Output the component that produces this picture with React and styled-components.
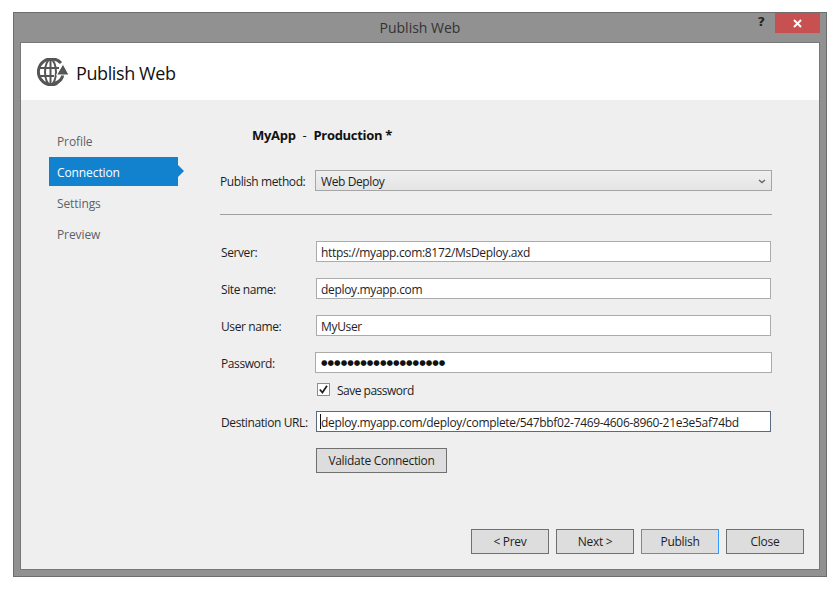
import React from "react";
import styled, { createGlobalStyle } from "styled-components";

const Global = createGlobalStyle`
  html, body { margin: 0; padding: 0; background: #fff; }
  * { box-sizing: border-box; }
  body { font-family: "Open Sans", "Noto Sans", sans-serif; font-size: 12px; color: #1e1e1e; }
`;
const Page = styled.div`
  width: 840px; height: 592px; padding: 12px 13px 0;
`;
const Window = styled.div`
  width: 814px; height: 565px; background: #919191; border: 1px solid #6d6d6d;
  display: flex; flex-direction: column; padding: 0 6px 6px 6px;
`;
const TitleBar = styled.div`
  height: 29px; flex: none; display: flex; align-items: center; justify-content: center; position: relative;
`;
const Title = styled.div`
  font-size: 14px; color: #333; letter-spacing: 0;
`;
const Help = styled.span`
  position: absolute; right: 55px; top: 1px; font: bold 13px "DejaVu Sans", sans-serif; color: #262626;
`;
const CloseX = styled.div`
  position: absolute; right: 0; top: 0; width: 45px; height: 20px; background: #c75050;
  display: flex; align-items: center; justify-content: center;
`;
const Body = styled.div`
  flex: 1; display: flex; flex-direction: column; background: #efefef; border: 1px solid #777;
`;
const Header = styled.div`
  height: 57px; flex: none; background: #fff; display: flex; align-items: center; padding-left: 16px; gap: 7px;
`;
const HeaderText = styled.div`
  font-size: 18px; color: #111; letter-spacing: -0.4px; padding-top: 3px;
`;
const Main = styled.div`
  flex: 1; display: flex; position: relative;
`;
const Nav = styled.nav`
  width: 159px; padding: 26px 0 0 28px; flex: none; display: flex; flex-direction: column; gap: 2px;
`;
const NavItem = styled.div`
  width: 129px; height: 29px; padding: 1px 0 0 8px; display: flex; align-items: center; position: relative; letter-spacing: -0.1px;
  color: ${p => (p.$active ? "#fff" : "#5f5f66")};
  background: ${p => (p.$active ? "#1382ce" : "transparent")};
  ${p => p.$active && `
    &::after {
      content: ""; position: absolute; left: 100%; top: 8px;
      border-left: 6px solid #1382ce; border-top: 6px solid transparent; border-bottom: 6px solid transparent;
    }
  `}
`;
const Form = styled.div`
  flex: 1; padding: 25px 0 0 40px; display: flex; flex-direction: column;
`;
const Profile = styled.div`
  height: 20px; margin-left: 32px; font-size: 13px; font-weight: 700; color: #111; display: flex; align-items: center; letter-spacing: -0.3px; white-space: pre;
`;
const Sep = styled.span`
  font-weight: 400; margin: 0 7px;
`;
const Row = styled.div`
  display: flex; align-items: center; height: 21px; margin-top: ${p => p.$mt || 16}px;
`;
const Label = styled.div`
  width: 96px; flex: none; padding: 1px 0 0 ${p => (p.$tight ? 0 : 1)}px; color: #1e1e1e; white-space: nowrap; letter-spacing: -0.4px;
`;
const Field = styled.div`
  width: 455px; height: 21px; background: #fff; border: 1px solid ${p => (p.$focus ? "#5a6b80" : "#ababab")};
  display: flex; align-items: center; padding: 1px 0 0 4px; color: #1e1e1e; white-space: nowrap; letter-spacing: -0.33px; position: relative;
`;
const PasswordField = styled(Field)`
  width: 457px; margin-left: -1px; padding: 0 0 0 5px;
`;
const Caret = styled.span`
  width: 1px; height: 15px; background: #111; position: absolute; left: 3px; top: 2px;
`;
const Dots = styled.span`
  font: 7.5px "DejaVu Sans", sans-serif; letter-spacing: 0; color: #111;
`;
const Select = styled.div`
  width: 457px; height: 21px; margin-left: -1px; border: 1px solid #a6a6a6; background: linear-gradient(#f0f0f0, #e4e4e4);
  display: flex; align-items: center; justify-content: space-between; padding: 1px 5px 0 5px; letter-spacing: -0.4px;
`;
const Divider = styled.div`
  height: 1px; width: 552px; background: #a0a0a0; margin-top: 23px;
`;
const CheckRow = styled.div`
  display: flex; align-items: center; gap: 7px; margin: 10px 0 0 97px; height: 13px; letter-spacing: -0.5px;
`;
const CheckText = styled.span`
  padding-top: 2px;
`;
const CheckBox = styled.div`
  width: 13px; height: 13px; background: #fff; border: 1px solid #8e8e8e; display: flex; align-items: center; justify-content: center;
`;
const Button = styled.div`
  height: 25px; width: ${p => p.$w || 78}px; background: #dddddd; border: 1px solid ${p => (p.$def ? "#3399ff" : "#707070")};
  display: flex; align-items: center; justify-content: center; color: #1e1e1e; letter-spacing: -0.3px;
`;
const ValidateWrap = styled.div`
  margin: 16px 0 0 96px;
`;
const Footer = styled.div`
  position: absolute; right: 15px; bottom: 15px; display: flex; gap: 7px;
`;

const GlobeIcon = () => (
  <svg width="32" height="28" viewBox="0 0 32 28" fill="none" stroke="#555" strokeWidth="2">
    <path d="M24 5A13 13 0 1 0 20 25.5" strokeWidth="3" />
    <ellipse cx="13.5" cy="14" rx="5.5" ry="12.5" />
    <path d="M2 10h20M2 18h15M13.5 2v24" />
    <path d="M17 25.5c5-1 8.5-4.5 9-10" strokeWidth="3" />
    <path d="M19.5 17l6.5-11 6 11z" fill="#555" stroke="#fff" strokeWidth="1" />
  </svg>
);

const rows = [
  ["Server:", "https://myapp.com:8172/MsDeploy.axd"],
  ["Site name:", "deploy.myapp.com"],
  ["User name:", "MyUser"],
];

export default function App() {
  return (
    <Page>
      <Global />
      <Window>
        <TitleBar>
          <Title>Publish Web</Title>
          <Help>?</Help>
          <CloseX>
            <svg width="9" height="9" viewBox="0 0 9 9"><path d="M1 1l7 7M8 1L1 8" stroke="#fff" strokeWidth="2" /></svg>
          </CloseX>
        </TitleBar>
        <Body>
          <Header>
            <GlobeIcon />
            <HeaderText>Publish Web</HeaderText>
          </Header>
          <Main>
            <Nav>
              <NavItem>Profile</NavItem>
              <NavItem $active>Connection</NavItem>
              <NavItem>Settings</NavItem>
              <NavItem>Preview</NavItem>
            </Nav>
            <Form>
              <Profile>MyApp<Sep>-</Sep>Production *</Profile>
              <Row $mt={25}>
                <Label $tight>Publish method:</Label>
                <Select>
                  Web Deploy
                  <svg width="8" height="5" viewBox="0 0 8 5"><path d="M1 1l3 2.5L7 1" fill="none" stroke="#666" strokeWidth="1.4" /></svg>
                </Select>
              </Row>
              <Divider />
              {rows.map(([l, v], i) => (
                <Row key={l} $mt={i === 0 ? 26 : 16}>
                  <Label>{l}</Label>
                  <Field>{v}</Field>
                </Row>
              ))}
              <Row>
                <Label>Password:</Label>
                <PasswordField><Dots>{"●".repeat(19)}</Dots></PasswordField>
              </Row>
              <CheckRow>
                <CheckBox>
                  <svg width="9" height="9" viewBox="0 0 9 9"><path d="M0.8 4.5l2.6 3L8 0.8" fill="none" stroke="#222" strokeWidth="1.8" /></svg>
                </CheckBox>
                <CheckText>Save password</CheckText>
              </CheckRow>
              <Row $mt={15}>
                <Label>Destination URL:</Label>
                <Field $focus><Caret />deploy.myapp.com/deploy/complete/547bbf02-7469-4606-8960-21e3e5af74bd</Field>
              </Row>
              <ValidateWrap><Button $w={131}>Validate Connection</Button></ValidateWrap>
            </Form>
            <Footer>
              <Button>&lt; Prev</Button>
              <Button>Next &gt;</Button>
              <Button $def>Publish</Button>
              <Button>Close</Button>
            </Footer>
          </Main>
        </Body>
      </Window>
    </Page>
  );
}
